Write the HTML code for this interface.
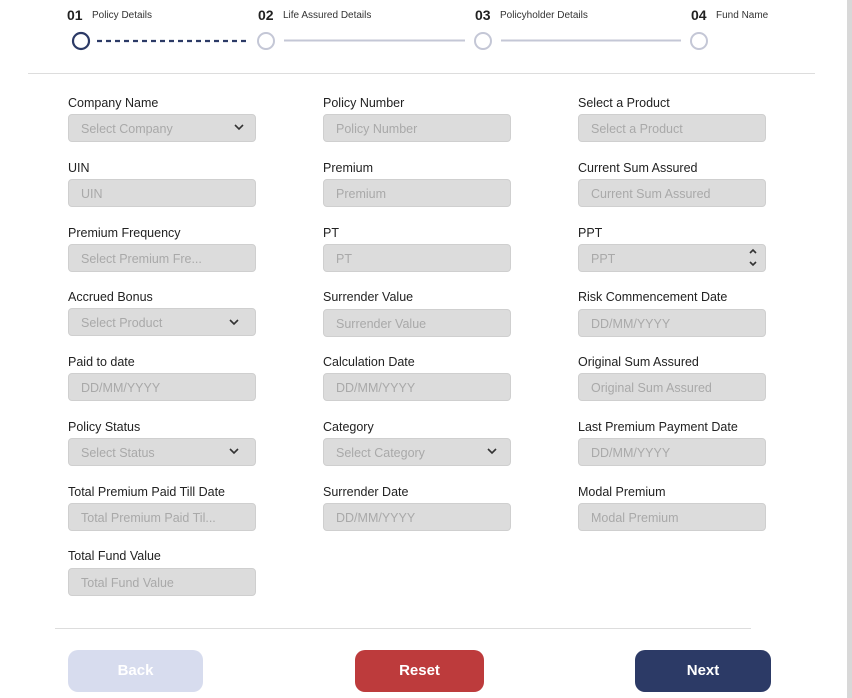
<!DOCTYPE html><html><head><style>
body{margin:0;width:852px;height:698px;background:#fff;font-family:"Liberation Sans",sans-serif;position:relative;overflow:hidden}
.a{position:absolute}
.num{font-size:14px;font-weight:bold;color:#222}
.st{font-size:10px;color:#333}
.lb{position:absolute;font-size:12.5px;color:#222}
.in{position:absolute;width:188px;height:28px;box-sizing:border-box;background:#dcdcdc;border:1px solid #cfcfcf;border-radius:4px;font-size:12.5px;color:#a9a9a9;padding:7px 0 0 12px}
.btn{position:absolute;top:650px;height:42px;border-radius:10px;color:#fff;font-size:15px;font-weight:bold;text-align:center;line-height:42px}
</style></head><body>
<div class="a" style="right:0;top:0;width:5px;height:698px;background:#d8d8d8"></div>
<div class="a num" style="left:67px;top:7px">01</div><div class="a st" style="left:92px;top:10px">Policy Details</div>
<div class="a num" style="left:258px;top:7px">02</div><div class="a st" style="left:283px;top:10px">Life Assured Details</div>
<div class="a num" style="left:475px;top:7px">03</div><div class="a st" style="left:500px;top:10px">Policyholder Details</div>
<div class="a num" style="left:691px;top:7px">04</div><div class="a st" style="left:716px;top:10px">Fund Name</div>
<svg class="a" style="left:0;top:0" width="852" height="80">
<circle cx="81" cy="41" r="8" fill="none" stroke="#2c3a66" stroke-width="2.2"/>
<line x1="97" y1="41" x2="248" y2="41" stroke="#2c3a66" stroke-width="2.2" stroke-dasharray="5,4"/>
<circle cx="266" cy="41" r="8" fill="none" stroke="#c4c7d6" stroke-width="2"/>
<line x1="284" y1="40.5" x2="465" y2="40.5" stroke="#c4c7d6" stroke-width="2"/>
<circle cx="483" cy="41" r="8" fill="none" stroke="#c4c7d6" stroke-width="2"/>
<line x1="501" y1="40.5" x2="681" y2="40.5" stroke="#c4c7d6" stroke-width="2"/>
<circle cx="699" cy="41" r="8" fill="none" stroke="#c4c7d6" stroke-width="2"/>
<line x1="28" y1="73.5" x2="815" y2="73.5" stroke="#ddd" stroke-width="1"/>
</svg>

<div class="lb" style="left:68px;top:96px">Company Name</div><div class="in" style="left:68px;top:114px">Select Company</div>
<div class="lb" style="left:323px;top:96px">Policy Number</div><div class="in" style="left:323px;top:114px">Policy Number</div>
<div class="lb" style="left:578px;top:96px">Select a Product</div><div class="in" style="left:578px;top:114px">Select a Product</div>

<div class="lb" style="left:68px;top:161px">UIN</div><div class="in" style="left:68px;top:179px">UIN</div>
<div class="lb" style="left:323px;top:161px">Premium</div><div class="in" style="left:323px;top:179px">Premium</div>
<div class="lb" style="left:578px;top:161px">Current Sum Assured</div><div class="in" style="left:578px;top:179px">Current Sum Assured</div>

<div class="lb" style="left:68px;top:226px">Premium Frequency</div><div class="in" style="left:68px;top:244px">Select Premium Fre...</div>
<div class="lb" style="left:323px;top:226px">PT</div><div class="in" style="left:323px;top:244px">PT</div>
<div class="lb" style="left:578px;top:226px">PPT</div><div class="in" style="left:578px;top:244px">PPT</div>

<div class="lb" style="left:68px;top:290px">Accrued Bonus</div><div class="in" style="left:68px;top:308px">Select Product</div>
<div class="lb" style="left:323px;top:290px">Surrender Value</div><div class="in" style="left:323px;top:309px">Surrender Value</div>
<div class="lb" style="left:578px;top:290px">Risk Commencement Date</div><div class="in" style="left:578px;top:309px">DD/MM/YYYY</div>

<div class="lb" style="left:68px;top:355px">Paid to date</div><div class="in" style="left:68px;top:373px">DD/MM/YYYY</div>
<div class="lb" style="left:323px;top:355px">Calculation Date</div><div class="in" style="left:323px;top:373px">DD/MM/YYYY</div>
<div class="lb" style="left:578px;top:355px">Original Sum Assured</div><div class="in" style="left:578px;top:373px">Original Sum Assured</div>

<div class="lb" style="left:68px;top:420px">Policy Status</div><div class="in" style="left:68px;top:438px">Select Status</div>
<div class="lb" style="left:323px;top:420px">Category</div><div class="in" style="left:323px;top:438px">Select Category</div>
<div class="lb" style="left:578px;top:420px">Last Premium Payment Date</div><div class="in" style="left:578px;top:438px">DD/MM/YYYY</div>

<div class="lb" style="left:68px;top:485px">Total Premium Paid Till Date</div><div class="in" style="left:68px;top:503px">Total Premium Paid Til...</div>
<div class="lb" style="left:323px;top:485px">Surrender Date</div><div class="in" style="left:323px;top:503px">DD/MM/YYYY</div>
<div class="lb" style="left:578px;top:485px">Modal Premium</div><div class="in" style="left:578px;top:503px">Modal Premium</div>

<div class="lb" style="left:68px;top:549px">Total Fund Value</div><div class="in" style="left:68px;top:568px">Total Fund Value</div>

<svg class="a" style="left:0;top:0" width="852" height="698" fill="none" stroke="#333" stroke-width="1.6">
<path d="M235 125l4 4 4-4"/><path d="M230 320l4 4 4-4"/><path d="M230 449l4 4 4-4"/><path d="M488 449l4 4 4-4"/>
<path d="M750 253l3-3 3 3M750 262l3 3 3-3"/>
<line x1="55" y1="628.5" x2="751" y2="628.5" stroke="#ddd" stroke-width="1"/>
</svg>

<div class="btn" style="left:68px;width:135px;background:#d7dcee">Back</div>
<div class="btn" style="left:355px;width:129px;background:#bd3b3c">Reset</div>
<div class="btn" style="left:635px;width:136px;background:#2c3a66">Next</div>
</body></html>
